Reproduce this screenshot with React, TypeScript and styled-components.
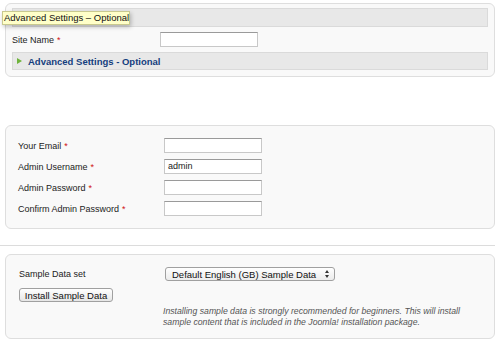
import React from 'react';
import styled, { createGlobalStyle } from 'styled-components';

const GlobalStyle = createGlobalStyle`
  html, body {
    margin: 0;
    padding: 0;
    background: #fff;
  }
  body {
    font-family: "Liberation Sans", Arial, sans-serif;
    color: #222;
  }
`

const Page = styled.div`
  position: relative;
  width: 500px;
  height: 344px;
  overflow: hidden;
  padding: 3px 5px 0 5px;
  box-sizing: border-box;
`

const Panel = styled.div<{ $pad: string; $mt?: number }>`
  box-sizing: border-box;
  width: 490px;
  margin-top: ${p => p.$mt ?? 0}px;
  padding: ${p => p.$pad};
  background: #f9f9f9;
  border: 1px solid #dedede;
  border-radius: 6px;
`

const Bar = styled.div<{ $h: number; $mt?: number }>`
  box-sizing: border-box;
  height: ${p => p.$h}px;
  margin-top: ${p => p.$mt ?? 0}px;
  background: #e8e8e8;
  border: 1px solid #dadada;
  display: flex;
  align-items: center;
  padding-left: 4px;
`

const Toggle = styled.div`
  display: flex;
  align-items: center;
  gap: 6px;
  font-size: 9.5px;
  font-weight: bold;
  color: #153e7e;
`

const Arrow = styled.span`
  width: 0;
  height: 0;
  border-top: 3.5px solid transparent;
  border-bottom: 3.5px solid transparent;
  border-left: 5px solid #6fb33c;
`

const Row = styled.div<{ $mt: number; $col?: number }>`
  display: grid;
  grid-template-columns: ${p => p.$col ?? 146}px 1fr;
  align-items: center;
  margin-top: ${p => p.$mt}px;
  font-size: 9px;
  color: #222;
`

const Label = styled.label`
  white-space: nowrap;
`

const Star = styled.span`
  color: #d01010;
  margin-left: 3px;
`

const Input = styled.div`
  box-sizing: border-box;
  width: 98px;
  height: 15px;
  background: #fff;
  border: 1px solid #c8c8c8;
  border-top-color: #9a9a9a;
  font-size: 9px;
  line-height: 13px;
  padding-left: 3px;
  color: #222;
`

const Separator = styled.div`
  height: 1px;
  background: #dcdcdc;
  margin: 16px 0 8px -5px;
  width: 495px;
`

const SampleGrid = styled.div`
  display: grid;
  grid-template-columns: 146px 1fr;
  font-size: 9px;
`

const Select = styled.div`
  box-sizing: border-box;
  width: 170px;
  height: 14px;
  border: 1px solid #a0a0a0;
  border-radius: 3px;
  background: linear-gradient(#ffffff, #ececec);
  display: flex;
  align-items: center;
  justify-content: space-between;
  padding: 0 5px 0 6px;
  font-size: 9.5px;
  color: #111;
`

const Button = styled.div`
  box-sizing: border-box;
  width: 94px;
  height: 14px;
  margin-top: 7px;
  border: 1px solid #a0a0a0;
  border-radius: 3px;
  background: linear-gradient(#ffffff, #e6e6e6);
  display: flex;
  align-items: center;
  justify-content: center;
  font-size: 9.5px;
  color: #111;
`

const Note = styled.p`
  margin: 4px 0 0 -2px;
  font-style: italic;
  font-size: 8.7px;
  line-height: 11px;
  color: #555;
`

const Tooltip = styled.div`
  position: absolute;
  left: 2px;
  top: 11px;
  box-sizing: border-box;
  width: 128px;
  height: 14px;
  background: #ffffc8;
  border: 1px solid #c9c98f;
  box-shadow: 1px 2px 4px rgba(0, 0, 0, 0.25);
  font-size: 9.5px;
  line-height: 12px;
  padding-left: 1px;
  color: #111;
  white-space: nowrap;
`

const SelectArrows = () => (
  <svg width="4" height="8" viewBox="0 0 4 8">
    <path d="M0 3 L2 0 L4 3 Z M0 5 L2 8 L4 5 Z" fill="#333" />
  </svg>
)

const Field = ({ label, value }: { label: string; value?: string }) => (
  <Row $mt={6}>
    <Label>{label}<Star>*</Star></Label>
    <Input>{value}</Input>
  </Row>
)

const App: React.FC = () => {
  return (
    <Page>
      <GlobalStyle />
      <Panel $pad="4px 6px 6px 6px">
        <Bar $h={19} />
        <Row $mt={5} $col={148}>
          <Label>Site Name<Star>*</Star></Label>
          <Input />
        </Row>
        <Bar $h={18} $mt={5}>
          <Toggle><Arrow />Advanced Settings - Optional</Toggle>
        </Bar>
      </Panel>

      <Panel $pad="6px 12px 12px 12px" $mt={48}>
        <Field label="Your Email" />
        <Field label="Admin Username" value="admin" />
        <Field label="Admin Password" />
        <Field label="Confirm Admin Password" />
      </Panel>

      <Separator />

      <Panel $pad="12px 12px 10px 13px">
        <SampleGrid>
          <Label style={{ alignSelf: 'center' }}>Sample Data set</Label>
          <Select>Default English (GB) Sample Data<SelectArrows /></Select>
          <Button>Install Sample Data</Button>
          <div />
          <div />
          <Note>
            Installing sample data is strongly recommended for beginners. This will install<br />
            sample content that is included in the Joomla! installation package.
          </Note>
        </SampleGrid>
      </Panel>

      <Tooltip>Advanced Settings – Optional</Tooltip>
    </Page>
  );
};

export default App;
